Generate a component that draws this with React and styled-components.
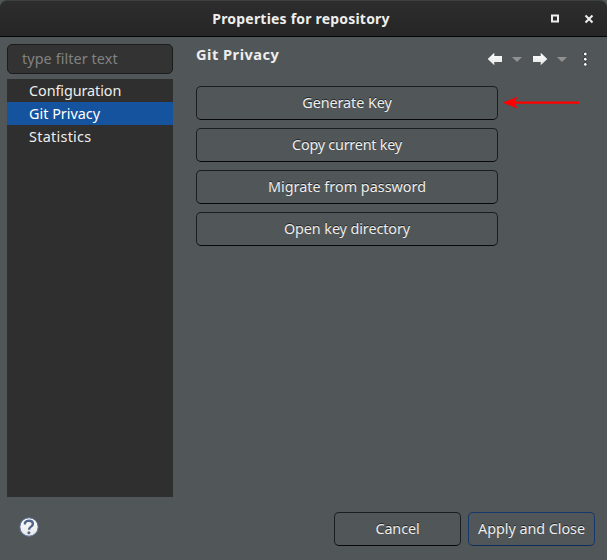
import React from "react";
import styled, { createGlobalStyle } from "styled-components";

const Global = createGlobalStyle`
  * { box-sizing: border-box; }
  html, body { margin: 0; background: #515658; overflow: hidden; }
  body { font-family: "Noto Sans", sans-serif; font-size: 14.4px; color: #eeeeec; }
`;

const Dialog = styled.div`
  width: 607px;
  height: 560px;
  display: flex;
  flex-direction: column;
  background: #515658;
`;

const TitleBar = styled.header`
  height: 37px;
  flex: none;
  display: grid;
  grid-template-columns: 73px 1fr 73px;
  align-items: center;
  background: linear-gradient(#2d2d2d, #262626);
  border-top: 1px solid #3e3f3f;
  border-bottom: 1px solid #050505;
  border-radius: 7px 7px 0 0;
`;

const Title = styled.h1`
  grid-column: 2;
  margin: 0;
  padding: 1px 5px 0 0;
  font-size: 14px;
  line-height: 20px;
  font-weight: 700;
  letter-spacing: 0.2px;
  text-align: center;
  white-space: nowrap;
`;

const WindowControls = styled.div`
  display: flex;
  gap: 25px;
  align-items: center;
  padding-left: 17px;
`;

const Main = styled.div`
  display: flex;
  padding: 7px 7px 0;
  height: 460px;
  flex: none;
`;

const Sidebar = styled.aside`
  width: 166px;
  flex: none;
  display: flex;
  flex-direction: column;
  gap: 5px;
`;

const Filter = styled.input`
  height: 30px;
  width: 100%;
  padding: 0 14px 1px;
  border: 1px solid #1c1c1c;
  border-radius: 5px;
  background: #333333;
  font: inherit;
  letter-spacing: 0.08px;
  outline: none;
  &::placeholder { color: #828282; opacity: 1; }
`;

const Tree = styled.ul`
  flex: 1;
  margin: 0;
  padding: 0;
  list-style: none;
  background: #2f2f2f;
`;

const TreeItem = styled.li`
  height: 23px;
  padding-left: 22px;
  line-height: 23px;
  white-space: nowrap;
  letter-spacing: ${(p) => p.$track || 0}px;
  background: ${(p) => (p.$selected ? "#15539e" : "transparent")};
  color: ${(p) => (p.$selected ? "#ffffff" : "#eeeeec")};
`;

const Page = styled.main`
  flex: 1;
  padding-left: 23px;
`;

const PageHeader = styled.div`
  height: 42px;
  display: flex;
  justify-content: space-between;
  padding-right: 5px;
`;

const PageTitle = styled.h2`
  margin: 0;
  font-size: 14.6px;
  line-height: 20px;
  font-weight: 700;
  letter-spacing: 0.5px;
`;

const NavBar = styled.svg`
  width: 110px;
  height: 22px;
  margin-top: 4px;
  flex: none;
`;

const ActionList = styled.div`
  display: flex;
  flex-direction: column;
  gap: 8px;
`;

const ActionRow = styled.div`
  display: flex;
  gap: 5px;
  align-items: center;
`;

const Button = styled.button`
  width: ${(p) => p.$width}px;
  height: 34px;
  flex: none;
  padding: 0 0 1px;
  border: 1px solid ${(p) => (p.$primary ? "#15396c" : "#1c1d1d")};
  border-bottom-color: ${(p) => (p.$primary ? "#0d2d58" : "#080808")};
  border-radius: 5px;
  background: #515658;
  color: #eeeeec;
  font: inherit;
  letter-spacing: ${(p) => p.$track || 0}px;
  text-shadow: 0 -1px rgba(0, 0, 0, 0.6);
  white-space: nowrap;
`;

const Footer = styled.footer`
  display: flex;
  align-items: center;
  justify-content: space-between;
  height: 34px;
  margin-top: 15px;
  padding: 0 12px 0 19px;
`;

const HelpButton = styled.span`
  display: flex;
  padding-bottom: 4px;
`;

const FooterButtons = styled.div`
  display: flex;
  gap: 7px;
`;

const actions = [
  { label: "Generate Key", pointed: true, track: -0.08 },
  { label: "Copy current key", track: -0.24 },
  { label: "Migrate from password", track: 0 },
  { label: "Open key directory", track: -0.1 },
];

function MaximizeIcon() {
  return (
    <svg width="8" height="9" viewBox="0 0 8 9">
      <path d="M1 1.5h6v6H1z" fill="none" stroke="#eeeeec" strokeWidth="2" />
    </svg>
  );
}

function CloseIcon() {
  return (
    <svg width="10" height="10" viewBox="0 0 10 10">
      <path d="M1.5 1.5l7 7M8.5 1.5l-7 7" stroke="#eeeeec" strokeWidth="2" />
    </svg>
  );
}

function Navigation() {
  return (
    <NavBar viewBox="485 48 110 22">
      <defs>
        <linearGradient id="arrow" x1="0" y1="0" x2="0" y2="1">
          <stop offset="0" stopColor="#ffffff" />
          <stop offset="1" stopColor="#e4e4e4" />
        </linearGradient>
      </defs>
      <path d="M487.7 59l6.6-6.3V56h7.7v6h-7.7v3.3z" fill="url(#arrow)" />
      <path d="M512 57h10l-5 5z" fill="#919191" />
      <path d="M547.3 59l-6.6-6.3V56H533v6h7.7v3.3z" fill="url(#arrow)" />
      <path d="M557 57h10l-5 5z" fill="#919191" />
      <g fill="#ffffff" stroke="#343638" strokeWidth="1">
        <circle cx="585.3" cy="54" r="1.9" />
        <circle cx="585.3" cy="59.2" r="1.9" />
        <circle cx="585.3" cy="64.4" r="1.9" />
      </g>
    </NavBar>
  );
}

function Pointer() {
  return (
    <svg width="78" height="14" viewBox="0 0 78 14">
      <path d="M9 6.6H76" stroke="#ff0000" strokeWidth="2.4" />
      <path d="M-.5 6.6L14.5 .8 11.6 6.6l2.9 5.8z" fill="#ff0000" />
    </svg>
  );
}

function HelpIcon() {
  return (
    <svg width="20" height="20" viewBox="0 0 20 20">
      <defs>
        <linearGradient id="help" x1="0" y1="0" x2="0" y2="1">
          <stop offset="0" stopColor="#ffffff" />
          <stop offset="1" stopColor="#e6e6e6" />
        </linearGradient>
      </defs>
      <circle cx="10" cy="10" r="9.2" fill="url(#help)" stroke="#5b6f97" />
      <path
        d="M6 7.4V5.6C7 4.4 8.4 3.8 10 3.8c2.3 0 3.9 1.2 3.9 3.1 0 2.7-3.9 2.8-3.9 5.8"
        fill="none"
        stroke="#53658b"
        strokeWidth="2.4"
      />
      <circle cx="9.9" cy="15.8" r="1.5" fill="#53658b" />
    </svg>
  );
}

export default function App() {
  return (
    <>
      <Global />
      <Dialog>
        <TitleBar>
          <Title>Properties for repository</Title>
          <WindowControls>
            <MaximizeIcon />
            <CloseIcon />
          </WindowControls>
        </TitleBar>
        <Main>
          <Sidebar>
            <Filter placeholder="type filter text" />
            <Tree>
              <TreeItem $track={-0.08}>Configuration</TreeItem>
              <TreeItem $selected>Git Privacy</TreeItem>
              <TreeItem $track={0.28}>Statistics</TreeItem>
            </Tree>
          </Sidebar>
          <Page>
            <PageHeader>
              <PageTitle>Git Privacy</PageTitle>
              <Navigation />
            </PageHeader>
            <ActionList>
              {actions.map((a) => (
                <ActionRow key={a.label}>
                  <Button $width={302} $track={a.track}>{a.label}</Button>
                  {a.pointed && <Pointer />}
                </ActionRow>
              ))}
            </ActionList>
          </Page>
        </Main>
        <Footer>
          <HelpButton>
            <HelpIcon />
          </HelpButton>
          <FooterButtons>
            <Button $width={127} $track={-0.1}>Cancel</Button>
            <Button $width={127} $track={-0.06} $primary>Apply and Close</Button>
          </FooterButtons>
        </Footer>
      </Dialog>
    </>
  );
}
